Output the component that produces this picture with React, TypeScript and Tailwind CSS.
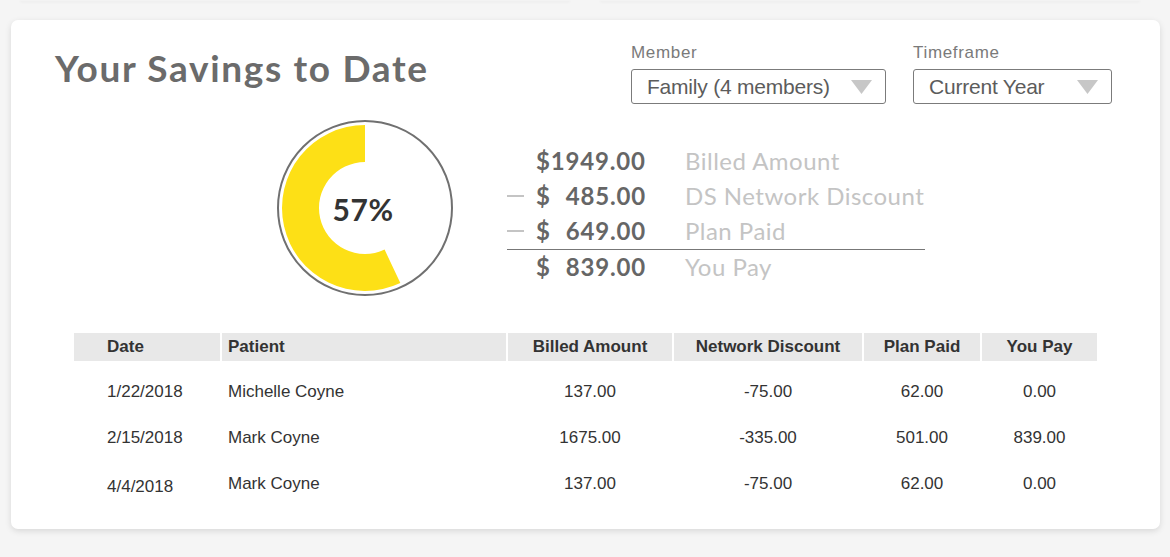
const rows = [
  { date: "1/22/2018", patient: "Michelle Coyne", billed: "137.00", discount: "-75.00", plan: "62.00", pay: "0.00" },
  { date: "2/15/2018", patient: "Mark Coyne", billed: "1675.00", discount: "-335.00", plan: "501.00", pay: "839.00" },
  { date: "4/4/2018", patient: "Mark Coyne", billed: "137.00", discount: "-75.00", plan: "62.00", pay: "0.00" },
];

const summary = [
  { dash: false, amount: "$1949.00", label: "Billed Amount" },
  { dash: true, amount: "485.00", label: "DS Network Discount" },
  { dash: true, amount: "649.00", label: "Plan Paid" },
  { dash: false, amount: "839.00", label: "You Pay" },
];

const geo = { fontFamily: "Lato, 'Open Sans', sans-serif" };
const helv = { fontFamily: "'Liberation Sans', Arial, sans-serif" };

// Select-like box with a grey down triangle
const Dropdown = ({ label, value, width }: { label: string; value: string; width: string }) => (
  <div className="flex flex-col">
    <span className="text-[17px] text-[#7a7a7a] tracking-[0.04em] leading-5 mb-[6px]" style={helv}>{label}</span>
    <div className={`${width} h-[35px] border border-[#7b7b7b] rounded-[3px] flex items-center justify-between pl-[15px] pr-[13px]`}>
      <span className="text-[21px] text-[#5c5c5c] tracking-[-0.01em]" style={helv}>{value}</span>
      <svg width="21" height="14" viewBox="0 0 21 14">
        <path d="M0 0 L21 0 L10.5 14 Z" fill="#c7c7c7" />
      </svg>
    </div>
  </div>
);

const Donut = () => (
  <div className="relative w-[180px] h-[180px]">
    <svg width="180" height="180" viewBox="0 0 180 180">
      <circle cx="90" cy="90" r="87" fill="white" stroke="#707070" strokeWidth="2" />
      <path
        d="M90 7 A83 83 0 1 0 125.34 165.1 L109.59 131.62 A46 46 0 1 1 90 44 Z"
        fill="#fde016"
      />
    </svg>
    <div className="absolute inset-0 flex items-center justify-center">
      <span className="text-[30px] font-bold text-[#333] tracking-[0.02em] mt-[2px] mr-[4px]" style={geo}>57%</span>
    </div>
  </div>
);

const cols = "grid grid-cols-[146px_284px_164px_188px_116px_115px] gap-x-[2px]";

export default function App() {
  return (
    <div className="w-[1170px] h-[557px] bg-[#f5f5f5] overflow-hidden">
      {/* edges of the cards above */}
      <div className="flex gap-[30px] px-[20px] h-0">
        <div className="w-[550px] h-[1px] bg-[#f3f3f3] shadow-[0_1px_3px_rgba(0,0,0,0.08)]" />
        <div className="w-[540px] h-[1px] bg-[#f3f3f3] shadow-[0_1px_3px_rgba(0,0,0,0.08)]" />
      </div>

      <div className="ml-[11px] mt-[20px] w-[1149px] h-[509px] bg-white rounded-[7px] shadow-[0_2px_6px_rgba(0,0,0,0.12)]">
        {/* header */}
        <div className="flex justify-between pl-[44px] pr-[48px] pt-[23px]">
          <h1 className="text-[37px] font-bold text-[#6b6b6b] tracking-[0.045em] leading-none mt-[6px]" style={geo}>
            Your Savings to Date
          </h1>
          <div className="flex gap-[27px]">
            <Dropdown label="Member" value="Family (4 members)" width="w-[255px]" />
            <Dropdown label="Timeframe" value="Current Year" width="w-[199px]" />
          </div>
        </div>

        {/* donut + summary */}
        <div className="flex items-start pl-[264px] mt-[14px]">
          <Donut />
          <div className="ml-[52px] mt-[25px] w-[418px]" style={geo}>
            {summary.map((s, i) => (
              <div
                key={s.label}
                className={`flex items-center h-[35.5px] whitespace-nowrap ${i === 2 ? "border-b border-[#777]" : ""}`}
              >
                <span className="w-[29px] shrink-0 flex items-center">
                  {s.dash && <span className="block w-[17px] h-[2px] bg-[#c4c4c4]" />}
                </span>
                <span className="w-[110px] shrink-0 flex justify-between text-[24px] font-bold text-[#666] tracking-[0.035em]">
                  {i === 0 ? (
                    <span>{s.amount}</span>
                  ) : (
                    <>
                      <span>$</span>
                      <span>{s.amount}</span>
                    </>
                  )}
                </span>
                <span className="ml-[39px] text-[24px] text-[#c4c4c4] tracking-[0.02em]">{s.label}</span>
              </div>
            ))}
          </div>
        </div>

        {/* table */}
        <div className="ml-[63px] mt-[35px]" style={helv}>
          <div className={`${cols} h-[28px] text-[17px] font-bold text-[#333]`}>
            <div className="bg-[#e8e8e8] flex items-center pl-[33px]">Date</div>
            <div className="bg-[#e8e8e8] flex items-center pl-[6px]">Patient</div>
            <div className="bg-[#e8e8e8] flex items-center justify-center">Billed Amount</div>
            <div className="bg-[#e8e8e8] flex items-center justify-center">Network Discount</div>
            <div className="bg-[#e8e8e8] flex items-center justify-center">Plan Paid</div>
            <div className="bg-[#e8e8e8] flex items-center justify-center">You Pay</div>
          </div>
          <div className="pt-[8px]">
            {rows.map((r, i) => (
              <div key={i} className={`${cols} h-[46px] items-center text-[17px] text-[#333]`}>
                <div className={`pl-[33px] ${i === 2 ? "mt-[5px]" : ""}`}>{r.date}</div>
                <div className="pl-[6px]">{r.patient}</div>
                <div className="text-center">{r.billed}</div>
                <div className="text-center">{r.discount}</div>
                <div className="text-center">{r.plan}</div>
                <div className="text-center">{r.pay}</div>
              </div>
            ))}
          </div>
        </div>
      </div>
    </div>
  );
}
